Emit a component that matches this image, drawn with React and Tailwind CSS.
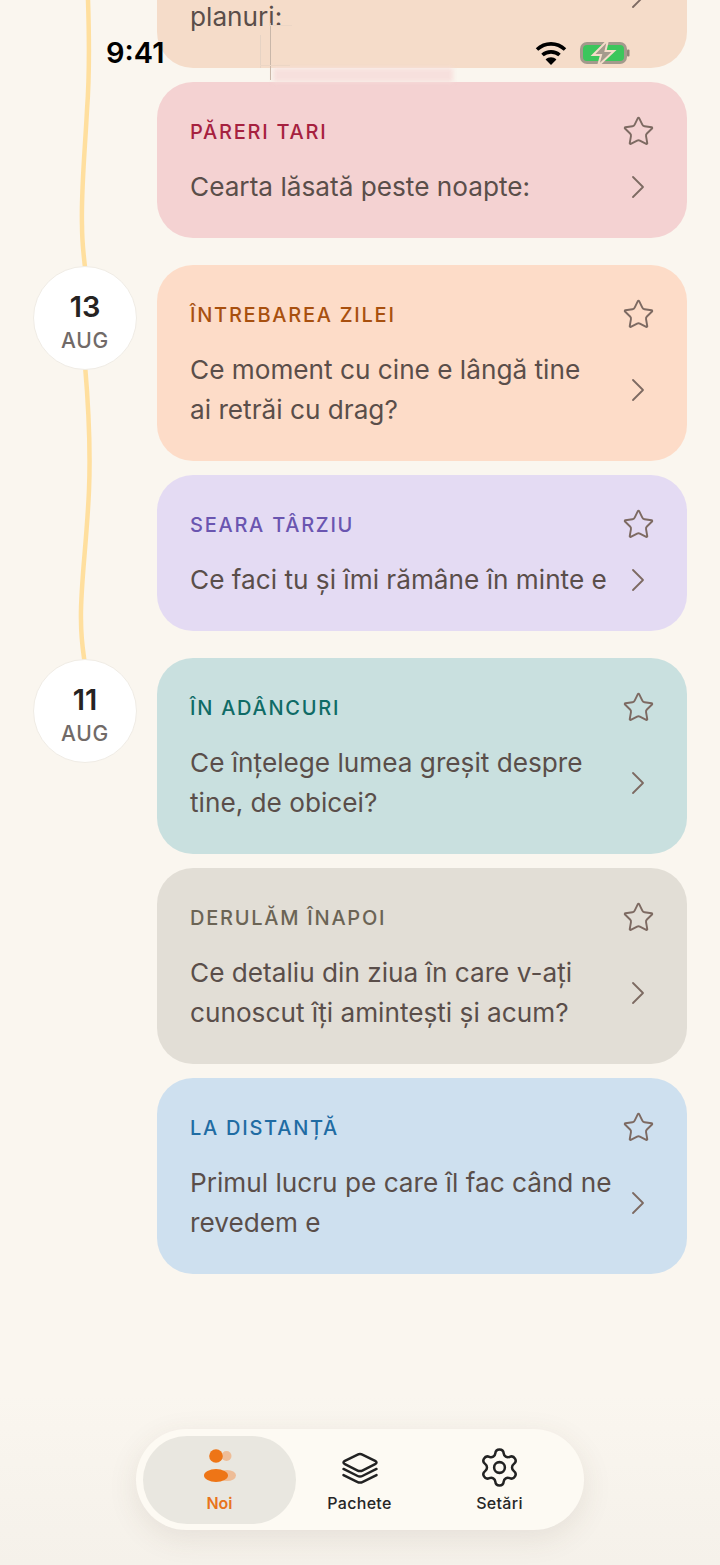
import { ChevronRight, Settings, Star } from 'lucide-react';

const groups = [
  {
    cards: [
      { label: 'ÎN DOI', labelColor: 'text-[#a8500f]', bg: 'bg-[#f5dcc9]', text: 'Ce facem cu weekendul și toate planuri:' },
      { label: 'PĂRERI TARI', labelColor: 'text-[#a6213f]', bg: 'bg-[#f4d2d2]', text: 'Cearta lăsată peste noapte:' },
    ],
  },
  {
    day: '13',
    cards: [
      { label: 'ÎNTREBAREA ZILEI', labelColor: 'text-[#a8500f]', bg: 'bg-[#fddcc8]', text: 'Ce moment cu cine e lângă tine\nai retrăi cu drag?' },
      { label: 'SEARA TÂRZIU', labelColor: 'text-[#6a55b0]', bg: 'bg-[#e4dbf3]', text: 'Ce faci tu și îmi rămâne în minte e' },
    ],
  },
  {
    day: '11',
    cards: [
      { label: 'ÎN ADÂNCURI', labelColor: 'text-[#0f6b66]', bg: 'bg-[#c9e0df]', text: 'Ce înțelege lumea greșit despre tine, de obicei?' },
      { label: 'DERULĂM ÎNAPOI', labelColor: 'text-[#6b6455]', bg: 'bg-[#e2ded6]', text: 'Ce detaliu din ziua în care v-ați cunoscut îți amintești și acum?' },
      { label: 'LA DISTANȚĂ', labelColor: 'text-[#1f6ca3]', bg: 'bg-[#cee0ef]', text: 'Primul lucru pe care îl fac când ne revedem e' },
    ],
  },
];

const Card = ({ card }) => (
  <div className={`${card.bg} rounded-[36px] px-[33px] pt-[36px] pb-[31px]`}>
    <div className="flex h-[26px] items-center justify-between">
      <span className={`${card.labelColor} mt-[2px] text-[20px] font-medium tracking-[1.75px]`}>{card.label}</span>
      <Star size={33} strokeWidth={1.4} className="-mr-px text-[#7d6a62]" />
    </div>
    <div className="mt-[23px] flex items-center justify-between">
      <p className="w-[425px] whitespace-pre-line text-[26.2px] leading-[40px] text-[#5a4e4a]">{card.text}</p>
      <ChevronRight size={40} strokeWidth={1.1} className="-mr-[4px] text-[#7d6a62]" />
    </div>
  </div>
);

const Battery = () => (
  <svg width="50" height="26" viewBox="0 0 50 26">
    <rect x="1.5" y="3.5" width="44" height="19" rx="5.5" fill="#3cc65c" stroke="#a39a8c" strokeWidth="3" />
    <rect x="47" y="9.5" width="2.5" height="7" rx="1" fill="#8f8578" />
    <path d="M28 0 L13 15 H21 L18 26 L34 11 H25.5 Z" fill="#a39a8c" stroke="#f3dcc9" strokeWidth="2" />
  </svg>
);

const Wifi = () => (
  <svg width="32" height="24" viewBox="0 0 32 24" fill="none" stroke="#000" strokeWidth="3.6">
    <path d="M2 8.5 C10 1 22 1 30 8.5" />
    <path d="M7.5 14 C12 9.8 20 9.8 24.5 14" />
    <path d="M16 24 L10.6 18.4 C13.5 15.6 18.5 15.6 21.4 18.4 Z" fill="#000" stroke="none" />
  </svg>
);

const NoiIcon = () => (
  <svg width="34" height="36" viewBox="0 0 34 36">
    <circle cx="23.5" cy="7" r="5" fill="#eebd98" />
    <ellipse cx="24" cy="26.5" rx="9" ry="5.5" fill="#eebd98" />
    <circle cx="13" cy="7" r="6.8" fill="#ee7516" />
    <ellipse cx="13" cy="26.5" rx="12" ry="6.5" fill="#ee7516" />
  </svg>
);

const StackIcon = () => (
  <svg width="38" height="34" viewBox="0 0 40 36" fill="none" stroke="#222" strokeWidth="2.6" strokeLinecap="round" strokeLinejoin="round">
    <path d="M17 4 C19 3 21 3 23 4 L36 10.5 C38 11.6 38 13 36 14 L23 20.5 C21 21.5 19 21.5 17 20.5 L4 14 C2 13 2 11.6 4 10.5 Z" />
    <path d="M2.5 19 L17 26.2 C19 27.2 21 27.2 23 26.2 L37.5 19" />
    <path d="M2.5 25.5 L17 32.7 C19 33.7 21 33.7 23 32.7 L37.5 25.5" />
  </svg>
);

const App = () => {
  return (
    <div className="relative h-[1565px] w-[720px] overflow-hidden bg-[#faf6ef] font-['Inter',sans-serif]">
      {/* timeline behind the date badges */}
      <svg className="absolute left-0 top-0" width="157" height="720" viewBox="0 0 157 720" fill="none">
        <path
          d="M88 0 C89 30 90 70 87 110 C85 150 81 190 82 225 C82 245 84 260 86 275 M85 365 C88 400 91 440 89 490 C87 540 80 590 81 620 C81 640 83 650 85 665"
          stroke="#ffdf9e"
          strokeWidth="4.5"
        />
      </svg>

      <div className="relative -mt-[128px] flex flex-col gap-[27px]">
        {groups.map((group, index) => (
          <div key={index} className="flex items-start">
            <div className="w-[157px] shrink-0 pl-[33px] pt-px">
              {group.day && (
                <div className="flex h-[104px] w-[104px] flex-col items-center justify-center rounded-full border border-[#f0ece5] bg-white pt-[7px]">
                  <span className="text-[29px] leading-[36px] font-semibold text-[#262322]">{group.day}</span>
                  <span className="mt-[2px] text-[21px] leading-[28px] font-medium tracking-[0.8px] text-[#716a68]">AUG</span>
                </div>
              )}
            </div>
            <div className="flex w-[530px] flex-col gap-[14px]">
              {group.cards.map((card) => (
                <Card key={card.label} card={card} />
              ))}
            </div>
          </div>
        ))}
      </div>

      {/* ghosting left behind the status bar */}
      <div className="absolute left-[273px] top-[68px] h-[14px] w-[180px] bg-[#f7e0dd] blur-[2px]" />
      <div className="absolute left-[270px] top-[23px] h-[57px] w-px bg-[#c9b7a9]" />
      <div className="absolute left-[260px] top-[35px] h-[33px] w-px bg-[#e6d3c4]" />
      <div className="absolute left-[270px] top-[25px] h-px w-[22px] bg-[#ecd6c5]" />
      <div className="absolute left-[260px] top-[65px] h-px w-[30px] bg-[#ecd6c5]" />

      {/* status bar */}
      <div className="absolute left-0 right-0 top-[34px] flex h-[38px] items-center justify-between pl-[106px] pr-[90px]">
        <span className="text-[29px] font-semibold text-black">9:41</span>
        <div className="flex items-center gap-[13px]">
          <Wifi />
          <Battery />
        </div>
      </div>

      {/* bottom tab bar */}
      <div className="absolute bottom-0 left-0 right-0 h-[170px] bg-gradient-to-b from-[#faf6ef] to-[#f5f1ea]" />
      <div className="absolute left-[136px] top-[1429px] flex h-[101px] w-[448px] items-center rounded-full bg-[#fdfaf3] pl-[7px] shadow-[0_8px_30px_rgba(90,70,50,0.1)]">
        <div className="flex h-[88px] w-[153px] flex-col items-center rounded-full bg-[#e9e7e0] pt-[13px]">
          <NoiIcon />
          <span className="mt-[6px] text-[16px] font-semibold text-[#e8741c]">Noi</span>
        </div>
        <div className="flex h-[88px] w-[127px] flex-col items-center pt-[15px]">
          <StackIcon />
          <span className="mt-[6px] text-[16px] font-medium tracking-[0.3px] text-[#262626]">Pachete</span>
        </div>
        <div className="ml-[13px] flex h-[88px] w-[127px] flex-col items-center pt-[10px]">
          <Settings size={43} strokeWidth={1.4} className="text-[#222]" />
          <span className="mt-[2px] text-[16px] font-medium tracking-[0.3px] text-[#262626]">Setări</span>
        </div>
      </div>
    </div>
  );
};

export default App;
